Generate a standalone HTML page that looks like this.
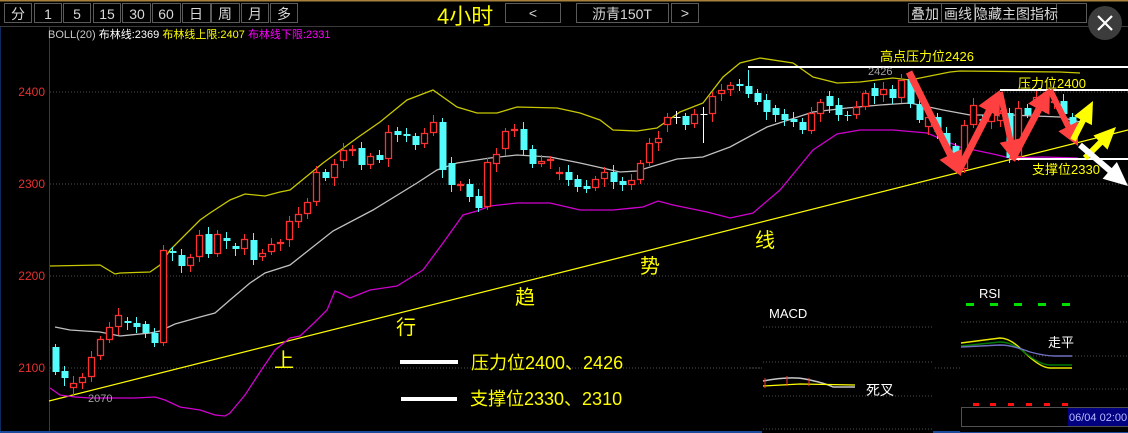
<!DOCTYPE html>
<html><head><meta charset="utf-8"><style>
html,body{margin:0;padding:0;background:#000;}
body{width:1128px;height:433px;overflow:hidden;position:relative;font-family:"Liberation Sans","Noto Sans CJK SC",sans-serif;}
svg{position:absolute;left:0;top:0;}
</style></head><body>
<svg id="s" width="1128" height="433" xmlns="http://www.w3.org/2000/svg" font-family="Liberation Sans, Noto Sans CJK SC, sans-serif">
<rect width="1128" height="433" fill="#000"/>
<line x1="0" y1="0.5" x2="1128" y2="0.5" stroke="#a8823c" stroke-width="2"/>
<line x1="0" y1="26.5" x2="1128" y2="26.5" stroke="#3a3a3a"/>
<line x1="49.5" y1="27" x2="49.5" y2="433" stroke="#3a3a3a"/>
<line x1="0.5" y1="27" x2="0.5" y2="433" stroke="#0a2a60"/>
<line x1="0" y1="432" x2="1128" y2="432" stroke="#1c4a9a" stroke-width="2"/>
<g fill="#000" stroke="#5a5a5a">
<rect x="4.5" y="3.5" width="27" height="19"/><rect x="34.5" y="3.5" width="27" height="19"/><rect x="63.5" y="3.5" width="27" height="19"/><rect x="93.5" y="3.5" width="27" height="19"/><rect x="122.5" y="3.5" width="28" height="19"/><rect x="152.5" y="3.5" width="28" height="19"/><rect x="182.5" y="3.5" width="28" height="19"/><rect x="211.5" y="3.5" width="28" height="19"/><rect x="241.5" y="3.5" width="27" height="19"/><rect x="270.5" y="3.5" width="27" height="19"/>
<rect x="505.5" y="3.5" width="55" height="19"/><rect x="576.5" y="3.5" width="92" height="19"/><rect x="671.5" y="3.5" width="27" height="19"/>
<rect x="908.5" y="3.5" width="33" height="19"/><rect x="941.5" y="3.5" width="33" height="19"/><rect x="975.5" y="3.5" width="81" height="19"/><rect x="1056.5" y="3.5" width="30" height="19"/>
</g>
<g fill="#d8d8d8" font-size="14" text-anchor="middle">
<text x="18" y="19">分</text><text x="48" y="19">1</text><text x="77" y="19">5</text><text x="107" y="19">15</text><text x="137" y="19">30</text><text x="166" y="19">60</text><text x="196" y="19">日</text><text x="225" y="19">周</text><text x="255" y="19">月</text><text x="284" y="19">多</text>
<text x="533" y="18">&lt;</text><text x="622" y="19">沥青150T</text><text x="685" y="18">&gt;</text>
<text x="925" y="19">叠加</text><text x="958" y="19">画线</text><text x="1016" y="19">隐藏主图指标</text>
</g>
<text x="437" y="24" fill="#ffff00" font-size="22">4小时</text>
<circle cx="1105" cy="23" r="17" fill="#3c3c3c"/>
<path d="M1098 16L1112 30M1112 16L1098 30" stroke="#fff" stroke-width="2.2"/>
<text x="48" y="38" font-size="11"><tspan fill="#c8c8c8">BOLL(20) </tspan><tspan fill="#fff">布林线:2369 </tspan><tspan fill="#ffff00">布林线上限:2407 </tspan><tspan fill="#ff00ff">布林线下限:2331</tspan></text>
<g stroke="#505050" stroke-dasharray="1,2">
<line x1="50" y1="92" x2="1128" y2="92"/><line x1="50" y1="184" x2="1128" y2="184"/><line x1="50" y1="276" x2="1128" y2="276"/><line x1="50" y1="368" x2="1128" y2="368"/>
</g>
<g fill="#e83030" font-size="12" text-anchor="end">
<text x="45" y="96">2400</text><text x="45" y="188">2300</text><text x="45" y="280">2200</text><text x="45" y="372">2100</text>
</g>
<line x1="49" y1="401" x2="1128" y2="130" stroke="#ffff00" stroke-width="1.2"/>
<polyline fill="none" stroke="#c8c800" stroke-width="1.3" points="50,266 100,265 115,274 120,273 150,272 160,265 170,250 200,220 210,213 230,200 245,194 265,196 280,192 290,190 323,163 357,138 380,122 407,100 433,90 457,107 477,113 497,113 517,107 557,108 580,113 600,120 613,130 637,131 657,128 680,112 703,103 723,77 740,63 760,58 793,63 813,77 837,83 860,82 893,78 910,80 950,72 960,71 1060,72 1080,73"/>
<polyline fill="none" stroke="#c0c0c0" stroke-width="1.3" points="55,327 70,330 100,332 120,336 150,333 160,331 175,324 200,317 215,313 230,300 250,283 265,273 290,265 333,231 373,210 417,183 437,170 457,163 490,158 517,155 550,157 580,163 620,172 637,171 677,159 703,157 730,147 767,127 813,112 847,108 880,105 910,103 943,110 970,115 1010,115 1060,117 1080,122"/>
<polyline fill="none" stroke="#d000d0" stroke-width="1.3" points="50,388 60,395 75,397 90,398 110,398 135,398 155,397 165,400 180,407 200,410 215,415 225,416 230,413 245,395 260,372 275,350 290,338 300,336 315,322 327,310 335,291 340,293 350,298 370,290 397,286 410,278 423,270 443,243 463,215 477,211 490,206 517,203 550,203 580,210 613,210 643,207 658,201 673,205 707,212 730,218 753,213 780,190 813,150 837,134 860,130 893,130 927,133 960,147 993,154 1010,158 1043,157 1078,158"/>
<g id="candles"></g>
<g stroke="#fff" stroke-width="2">
<line x1="748" y1="67" x2="1128" y2="67"/><line x1="1000" y1="90" x2="1128" y2="90"/><line x1="1010" y1="159" x2="1128" y2="159"/>
</g>
<text x="868" y="75" fill="#a0a0a0" font-size="11">2426</text>
<text x="88" y="402" fill="#a0a0a0" font-size="11">2070</text>
<g fill="#ffff00" font-size="13">
<text x="880" y="61">高点压力位2426</text><text x="1018" y="88">压力位2400</text><text x="1032" y="174">支撑位2330</text>
</g>
<g fill="#ffff00" font-size="20">
<text x="274" y="367">上</text><text x="396" y="334">行</text><text x="515" y="304">趋</text><text x="640" y="273">势</text><text x="755" y="247">线</text>
</g>
<rect x="400" y="360" width="58" height="4" fill="#fff"/><rect x="401" y="397" width="56" height="4" fill="#fff"/>
<g fill="#ffff00" font-size="18"><text x="471" y="369">压力位2400、2426</text><text x="470" y="405">支撑位2330、2310</text></g>
<g id="arrows"></g>
<rect x="762" y="300" width="171" height="133" fill="#000"/>
<g stroke="#505050" stroke-dasharray="1,2">
<line x1="763" y1="327" x2="932" y2="327"/><line x1="763" y1="362" x2="932" y2="362"/><line x1="763" y1="396" x2="932" y2="396"/><line x1="763" y1="429" x2="932" y2="429"/>
<line x1="750" y1="368" x2="762" y2="368"/>
</g>
<text x="769" y="318" fill="#fff" font-size="13">MACD</text>
<path d="M763 381Q790 376 805 379Q825 383 833 387L855 387" fill="none" stroke="#c8c8c8" stroke-width="1.5"/>
<path d="M763 386L800 384L855 385" fill="none" stroke="#ffff00" stroke-width="1.3"/>
<g stroke="#ff3030"><line x1="765" y1="378" x2="765" y2="388"/><line x1="787" y1="376" x2="787" y2="386"/><line x1="809" y1="378" x2="809" y2="386"/></g>
<text x="866" y="395" fill="#fff" font-size="14">死叉</text>
<rect x="960" y="280" width="168" height="152" fill="#000"/>
<g stroke="#505050" stroke-dasharray="1,2">
<line x1="961" y1="322" x2="1128" y2="322"/><line x1="961" y1="356" x2="1128" y2="356"/><line x1="961" y1="389" x2="1128" y2="389"/>
</g>
<text x="979" y="298" fill="#fff" font-size="13">RSI</text>
<g fill="#00e000"><rect x="966" y="303" width="8" height="3"/><rect x="990" y="303" width="8" height="3"/><rect x="1014" y="303" width="8" height="3"/><rect x="1038" y="303" width="8" height="3"/><rect x="1062" y="303" width="8" height="3"/></g>
<g fill="#ff1010"><rect x="973" y="403" width="6" height="3"/><rect x="990" y="403" width="6" height="3"/><rect x="1008" y="403" width="6" height="3"/><rect x="1026" y="403" width="6" height="3"/><rect x="1044" y="403" width="6" height="3"/><rect x="1062" y="403" width="6" height="3"/></g>
<path d="M961 343L1000 338Q1010 338 1022 350Q1040 368 1050 368L1072 368" fill="none" stroke="#e8e800" stroke-width="1.4"/>
<path d="M961 346L1000 342Q1012 342 1024 352Q1040 365 1050 365L1072 365" fill="none" stroke="#007a00" stroke-width="1.4"/>
<path d="M961 347L1000 345Q1012 345 1030 352Q1045 356 1055 356L1072 356" fill="none" stroke="#7070c0" stroke-width="1.4"/>
<text x="1048" y="347" fill="#fff" font-size="13">走平</text>
<rect x="961.5" y="407.5" width="166" height="19" fill="none" stroke="#505050"/>
<rect x="1068" y="408" width="60" height="18" fill="#000080"/>
<text x="1069" y="421" fill="#b8b8ff" font-size="11">06/04 02:00</text>
</svg>
<script>
var d=[[55,347,372,0],[64,371,378,0],[73,383,388,1],[82,377,383,1],[91,357,377,1],[100,339,356,1],[109,327,340,1],[118,315,327,1],[127,321,323,0],[136,323,327,0],[145,324,333,0],[154,333,343,0],[163,250,343,1],[172,251,253,0],[181,255,266,0],[190,257,266,1],[199,235,257,1],[208,234,254,0],[217,234,254,1],[226,238,241,0],[235,246,249,0],[244,239,249,1],[253,240,260,0],[262,253,257,1],[271,244,252,1],[280,242,243,1],[289,221,240,1],[298,214,222,1],[307,202,214,1],[316,172,202,1],[325,172,178,0],[334,164,178,1],[343,150,161,1],[352,149,150,1],[361,148,165,0],[370,156,165,1],[379,155,160,0],[388,132,159,1],[397,131,135,0],[406,134,136,0],[415,136,145,0],[424,133,144,1],[433,122,133,1],[442,122,170,0],[451,163,185,0],[460,184,185,1],[469,184,197,0],[478,196,208,0],[487,162,207,1],[496,154,164,1],[505,131,149,1],[514,129,131,1],[523,129,150,0],[532,149,164,0],[541,161,164,1],[550,159,161,1],[559,172,173,1],[568,172,180,0],[577,179,187,0],[586,186,189,0],[595,179,188,1],[604,172,179,1],[613,172,182,0],[622,181,185,0],[631,180,185,1],[640,163,180,1],[649,143,163,1],[658,138,143,1],[667,117,125,1],[676,117,118,2],[685,116,125,0],[694,114,124,1],[703,114,115,2],[712,96,114,1],[721,90,94,1],[730,85,90,1],[739,84,86,0],[748,86,94,0],[757,93,102,0],[766,100,112,0],[775,108,115,0],[784,114,120,0],[793,119,122,0],[802,122,130,0],[811,113,131,1],[820,102,114,1],[829,96,106,0],[838,105,115,0],[847,115,116,0],[856,107,115,1],[865,93,107,1],[874,88,96,0],[883,89,95,1],[892,89,98,0],[901,80,98,1],[910,79,104,0],[919,104,120,0],[928,117,127,1],[937,117,132,0],[946,133,147,0],[955,146,157,0],[964,125,169,1],[973,105,125,1],[982,119,121,0],[991,105,122,1],[1000,113,121,1],[1009,113,158,0],[1018,108,157,1],[1027,108,115,0],[1036,97,105,1],[1045,100,106,1],[1054,101,103,1],[1063,101,114,0],[1072,117,128,0]];
var s='';
d.forEach(function(c,i){var x=c[0],t=c[1],b=c[2],r=c[3];var hi=t-3-(i*7%5),lo=b+3+(i*5%6);
if(c[0]==703)lo=143;if(c[0]==748)hi=70;if(c[0]==163)hi=245;
var col=r==1?'#ff3030':(r==2?'#ffffff':'#54fcfc');
s+='<line x1="'+(x+.5)+'" y1="'+hi+'" x2="'+(x+.5)+'" y2="'+lo+'" stroke="'+col+'"/>';
var h=Math.max(b-t,1);
if(r==1)s+='<rect x="'+(x-2.5)+'" y="'+(t+.5)+'" width="6" height="'+Math.max(h-1,1)+'" fill="#000" stroke="'+col+'" stroke-width="1.3"/>';
else s+='<rect x="'+(x-2.5)+'" y="'+t+'" width="7" height="'+h+'" fill="'+col+'"/>';});
document.getElementById('candles').innerHTML=s;
function arr(x1,y1,x2,y2,w,hw,hl,col){var dx=x2-x1,dy=y2-y1,L=Math.sqrt(dx*dx+dy*dy),ux=dx/L,uy=dy/L,px=-uy,py=ux;
var bx=x2-ux*hl,by=y2-uy*hl;var p=[[x1+px*w/2,y1+py*w/2],[bx+px*w/2,by+py*w/2],[bx+px*hw,by+py*hw],[x2,y2],[bx-px*hw,by-py*hw],[bx-px*w/2,by-py*w/2],[x1-px*w/2,y1-py*w/2]];
return '<polygon fill="'+col+'" points="'+p.map(function(q){return q[0].toFixed(1)+','+q[1].toFixed(1)}).join(' ')+'"/>';}
var a='';var R='#ff4040';
a+=arr(909,72,961,176,7,12,24,R);a+=arr(958,172,1000,90,7,12,24,R);a+=arr(1000,92,1015,162,6,11,22,R);a+=arr(1012,160,1050,88,7,12,24,R);a+=arr(1050,90,1078,146,6,11,22,R);
a+=arr(1073,140,1093,101,6,10,22,'#ffff00');a+=arr(1085,158,1116,127,6,10,22,'#ffff00');a+=arr(1080,145,1128,186,6,11,24,'#ffffff');
document.getElementById('arrows').innerHTML=a;
</script>
</body></html>
